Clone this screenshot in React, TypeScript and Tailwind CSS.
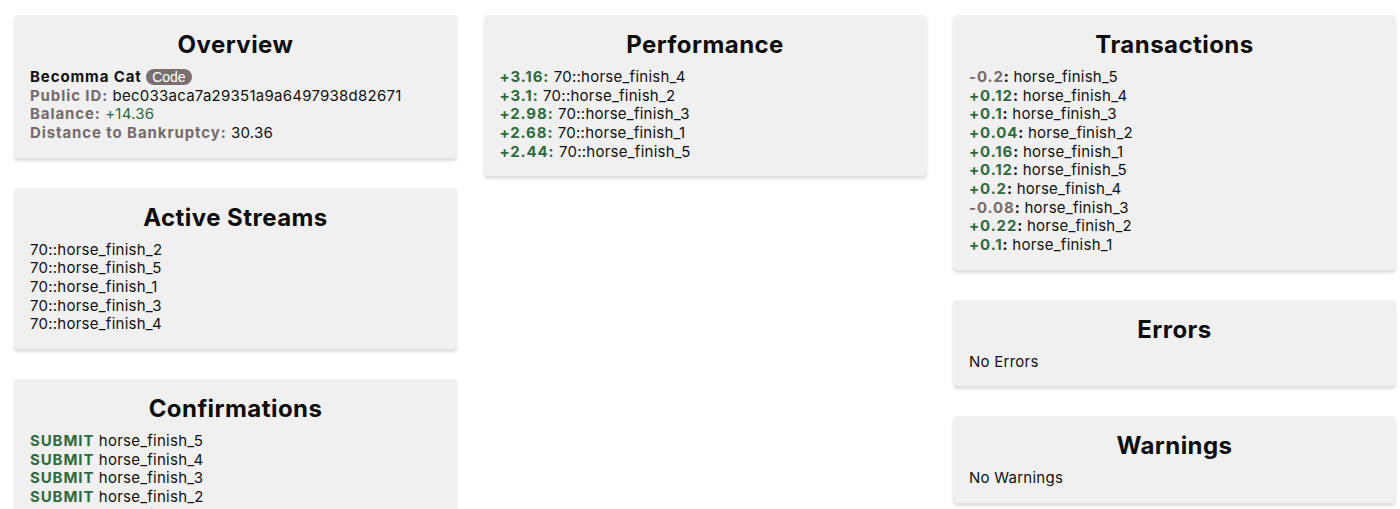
import React from "react";

const FONT = { fontFamily: "Inter, 'Noto Sans', sans-serif" };

function Card({ title, children }: { title: string; children: React.ReactNode }) {
  return (
    <div className="bg-[#f0f0f0] rounded-[4px] shadow-[0_3px_3px_rgba(0,0,0,0.13)] px-4 pt-[15px] pb-[15px]">
      <h2 className="text-center text-[24px] font-bold leading-[29px] tracking-[0.45px] text-[#0d0d0d] mb-[9px]">{title}</h2>
      <div className="text-[15px] leading-[18.67px] tracking-[0.25px] text-[#111]">{children}</div>
    </div>
  );
}

const G = "text-[#2e6a3d] font-bold tracking-[0.9px]";
const B = "text-[#766b6b] font-bold tracking-[0.9px]";

export default function App() {
  const perf = [
    ["+3.16", "70::horse_finish_4"],
    ["+3.1", "70::horse_finish_2"],
    ["+2.98", "70::horse_finish_3"],
    ["+2.68", "70::horse_finish_1"],
    ["+2.44", "70::horse_finish_5"],
  ];
  const tx = [
    ["-0.2", "horse_finish_5"],
    ["+0.12", "horse_finish_4"],
    ["+0.1", "horse_finish_3"],
    ["+0.04", "horse_finish_2"],
    ["+0.16", "horse_finish_1"],
    ["+0.12", "horse_finish_5"],
    ["+0.2", "horse_finish_4"],
    ["-0.08", "horse_finish_3"],
    ["+0.22", "horse_finish_2"],
    ["+0.1", "horse_finish_1"],
  ];
  const streams = ["70::horse_finish_2", "70::horse_finish_5", "70::horse_finish_1", "70::horse_finish_3", "70::horse_finish_4"];
  const confs = ["horse_finish_5", "horse_finish_4", "horse_finish_3", "horse_finish_2", "horse_finish_1"];
  return (
    <div style={FONT} className="bg-white min-h-screen pl-[14px] pt-[15px] pb-[30px] grid grid-cols-[443px_443px_443px] gap-x-[26.5px] items-start">
      <div className="flex flex-col gap-[30px]">
        <Card title="Overview">
          <div className="font-bold tracking-[0.9px]">
            Becomma Cat{" "}
            <span
              className="inline-block align-[0px] bg-[#7a6f6f] text-white font-normal tracking-normal text-[14px] leading-[16px] px-[6px] rounded-full"
              style={{ fontFamily: "'Liberation Sans', Arial, sans-serif" }}
            >
              Code
            </span>
          </div>
          <div>
            <span className={B}>Public ID:</span> bec033aca7a29351a9a6497938d82671
          </div>
          <div>
            <span className={B}>Balance:</span> <span className="text-[#2e6a3d]">+14.36</span>
          </div>
          <div>
            <span className={B}>Distance to Bankruptcy:</span> 30.36
          </div>
        </Card>
        <Card title="Active Streams">
          {streams.map((s, i) => (
            <div key={i}>{s}</div>
          ))}
        </Card>
        <Card title="Confirmations">
          {confs.map((s, i) => (
            <div key={i}>
              <span className={G}>SUBMIT</span> {s}
            </div>
          ))}
        </Card>
      </div>
      <div className="flex flex-col gap-[30px]">
        <Card title="Performance">
          {perf.map(([v, s], i) => (
            <div key={i}>
              <span className={G}>{v}:</span> {s}
            </div>
          ))}
        </Card>
      </div>
      <div className="flex flex-col gap-[30px]">
        <Card title="Transactions">
          {tx.map(([v, s], i) => (
            <div key={i}>
              <span className={v.startsWith("-") ? B : G}>{v}</span>
              <span className="font-bold">:</span> {s}
            </div>
          ))}
        </Card>
        <Card title="Errors">
          <div>No Errors</div>
        </Card>
        <Card title="Warnings">
          <div>No Warnings</div>
        </Card>
      </div>
    </div>
  );
}
